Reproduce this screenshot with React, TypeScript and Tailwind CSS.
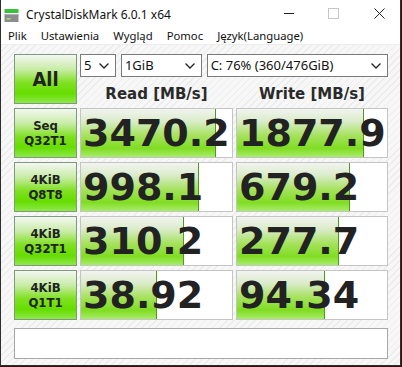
import React from 'react';

const rows = [
  { l1: 'Seq', l2: 'Q32T1', r: '3470.2', rw: 135, w: '1877.9', ww: 127 },
  { l1: '4KiB', l2: 'Q8T8', r: '998.1', rw: 118, w: '679.2', ww: 113 },
  { l1: '4KiB', l2: 'Q32T1', r: '310.2', rw: 103, w: '277.7', ww: 102 },
  { l1: '4KiB', l2: 'Q1T1', r: '38.92', rw: 76, w: '94.34', ww: 88 },
];

const ui = { fontFamily: '"Noto Sans", "Open Sans", sans-serif' };
const dv = { fontFamily: '"DejaVu Sans", Verdana, sans-serif' };
const dvc = { fontFamily: '"DejaVu Sans Condensed", "DejaVu Sans", sans-serif' };

function Chevron() {
  return (
    <svg width="10" height="6" viewBox="0 0 10 6" className="shrink-0">
      <polyline points="0.5,0.5 5,5 9.5,0.5" fill="none" stroke="#222" strokeWidth="1.3" />
    </svg>
  );
}

function Combo({ w, text }: { w: string; text: string }) {
  return (
    <div className={`${w} h-[23px] border border-[#7a7a7a] bg-white flex items-center justify-between pl-[3px] pr-[6px]`}>
      <span className="text-[13px] text-[#111] leading-none" style={ui}>{text}</span>
      <Chevron />
    </div>
  );
}

function LabelBtn({ children }: { children: React.ReactNode }) {
  return (
    <div className="w-[63px] h-[50px] shrink-0 border border-[#7f9a7f] bg-[linear-gradient(to_bottom,#f4f7f2_0%,#c8eca6_30%,#7fe020_58%,#66dd00_80%,#8ee84a_100%)] flex flex-col items-center justify-center text-[#222] font-bold">
      {children}
    </div>
  );
}

function ValueBox({ value, fill, w }: { value: string; fill: number; w: string }) {
  return (
    <div className={`${w} h-[50px] shrink-0 border border-[#c4c4c4] bg-white relative overflow-hidden`}>
      <div
        className="absolute left-0 top-0 bottom-0 border-r border-[#4f9a1e] bg-[linear-gradient(to_bottom,#f2f4f0_0%,#dbeccc_25%,#a6e25e_55%,#80dd22_82%,#a8ec6a_100%)]"
        style={{ width: fill }}
      />
      <div
        className="relative h-full flex items-center pl-[2px] pb-[1px] text-[38px] font-bold text-[#222] leading-none whitespace-nowrap"
        style={dv}
      >
        {value}
      </div>
    </div>
  );
}

export default function App() {
  return (
    <div className="w-[402px] h-[367px] bg-[#3d0b0b] overflow-hidden">
      <div className="w-[401px] h-[366px] border-l border-r border-b border-[#2e2e2e] bg-white flex flex-col">
        {/* title bar */}
        <div className="h-[30px] flex items-center relative" style={ui}>
          <svg width="16" height="16" viewBox="0 0 16 16" className="ml-[3px] mt-[1px]">
            <rect x="0.5" y="1" width="14" height="4" fill="#37c23a" />
            <rect x="0.5" y="6" width="14" height="8" fill="#8c8c8c" />
            <rect x="0.5" y="6" width="14" height="1" fill="#b0b0b0" />
            <rect x="2.5" y="10" width="4" height="1.5" fill="#9be37a" />
          </svg>
          <span className="ml-[6px] text-[12px] text-[#111]">CrystalDiskMark 6.0.1 x64</span>
          <div className="absolute left-[283px] top-[13px] w-[10px] h-[1px] bg-[#222]" />
          <div className="absolute left-[327px] top-[8px] w-[11px] h-[11px] border border-[#c6c6c6]" />
          <svg className="absolute left-[373px] top-[8px]" width="11" height="11" viewBox="0 0 11 11">
            <path d="M0.5 0.5 L10.5 10.5 M10.5 0.5 L0.5 10.5" stroke="#222" strokeWidth="1" />
          </svg>
        </div>
        {/* menu */}
        <div className="h-[15px] border-b border-[#ececec] flex items-center text-[11.3px] text-[#111] leading-none pb-[3px]" style={ui}>
          <span className="ml-[7px]">Plik</span>
          <span className="ml-[14px]">Ustawienia</span>
          <span className="ml-[14px]">Wygląd</span>
          <span className="ml-[14px]">Pomoc</span>
          <span className="ml-[14px]">Język(Language)</span>
        </div>
        {/* client */}
        <div className="flex-1 pl-[13px] pt-[9px] bg-[repeating-linear-gradient(135deg,#f7f7f7_0px,#f7f7f7_4px,#ececec_4px,#ececec_5px)]">
          <div className="flex gap-[3px]">
            <LabelBtn>
              <span className="text-[20px] leading-none" style={dvc}>All</span>
            </LabelBtn>
            <div className="flex flex-col w-[308px]">
              <div className="flex gap-[5px]">
                <Combo w="w-[36px]" text="5" />
                <Combo w="w-[81px]" text="1GiB" />
                <Combo w="w-[182px]" text="C: 76% (360/476GiB)" />
              </div>
              <div className="flex gap-[3px] h-[27px] items-center pt-[7px] text-[15px] font-bold text-[#2a2a2a] leading-none" style={dv}>
                <div className="w-[153px] text-center">Read [MB/s]</div>
                <div className="w-[152px] text-center">Write [MB/s]</div>
              </div>
            </div>
          </div>
          <div className="flex flex-col gap-[4px] mt-[4px]">
            {rows.map((r, i) => (
              <div key={i} className="flex gap-[3px]">
                <LabelBtn>
                  <span className="text-[13px] leading-[15px]" style={dvc}>{r.l1}</span>
                  <span className="text-[13px] leading-[15px]" style={dvc}>{r.l2}</span>
                </LabelBtn>
                <ValueBox value={r.r} fill={r.rw} w="w-[153px]" />
                <ValueBox value={r.w} fill={r.ww} w="w-[152px]" />
              </div>
            ))}
          </div>
          <div className="mt-[8px] w-[374px] h-[31px] border border-[#a8a8a8] bg-white" />
        </div>
      </div>
    </div>
  );
}
